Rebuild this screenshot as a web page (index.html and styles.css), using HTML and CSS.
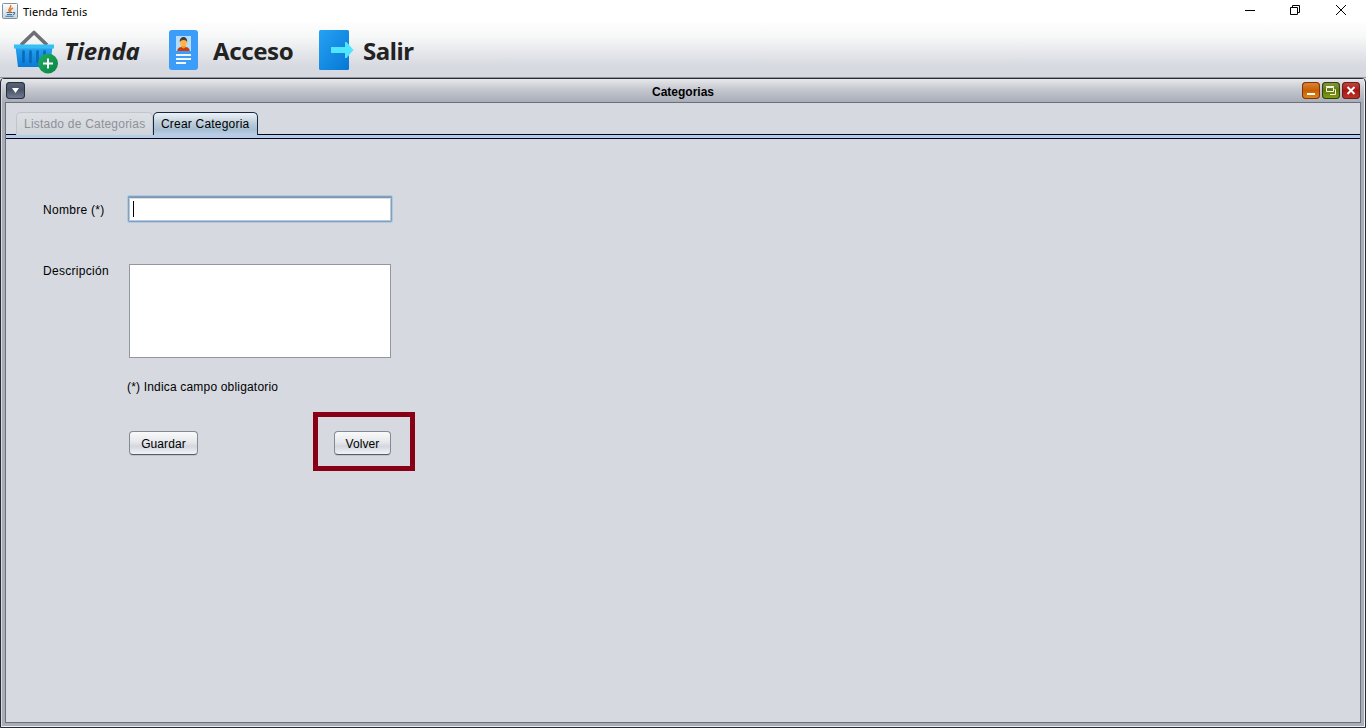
FILE: index.html
```html
<!DOCTYPE html>
<html lang="es">
<head>
<meta charset="utf-8">
<title>Tienda Tenis</title>
<link rel="stylesheet" href="styles.css">
</head>
<body>
<div class="app">
  <header class="titlebar">
    <svg class="java" width="16" height="16" viewBox="0 0 16 16">
      <defs><linearGradient id="jv" x2="0" y2="1"><stop stop-color="#fff"/><stop offset="1" stop-color="#c3d5e2"/></linearGradient></defs>
      <rect x=".5" y=".5" width="15" height="15" rx="1" fill="url(#jv)" stroke="#7d929e"/>
      <path d="M8 9C4.500 6.500 10 5 8.500 2M9 8.500C7.500 7 9 6 11 5" fill="none" stroke="#e87b28" stroke-width="1.500"/>
      <path d="M4.500 9.500h6M5 11.500h5M3.500 13.300h8M11 9.500c2.500-.5 2 1.700 0 2" fill="none" stroke="#4c7190" stroke-width="1.100"/>
    </svg>
    <span class="app-name">Tienda Tenis</span>
    <svg class="window-controls" width="110" height="22" viewBox="0 0 110 22" fill="none" stroke="#000">
      <path d="M1 10.500h10"/>
      <path d="M46.500 7.500h7v7h-7zM48.500 7.500v-2h7v7h-2"/>
      <path d="M92 5l10 10M102 5l-10 10"/>
    </svg>
  </header>
  <nav class="menu">
    <svg class="basket" width="46" height="44" viewBox="0 0 46 44">
      <defs>
        <linearGradient id="bk" x2="0" y2="1"><stop stop-color="#2aa4ef"/><stop offset="1" stop-color="#067bd8"/></linearGradient>
        <linearGradient id="pl" x2="1" y2="1"><stop stop-color="#21ad64"/><stop offset="1" stop-color="#088242"/></linearGradient>
      </defs>
      <path d="M7 15L20 2.500L33 15" fill="none" stroke="#6c7076" stroke-width="3.600" stroke-linejoin="round"/>
      <path d="M1.500 17h37L36 37H4z" fill="url(#bk)"/>
      <path d="M0 14.500h40v4H0z" fill="#35bff4"/>
      <path d="M9.500 21.500v10.500M16.500 21.500v10.500M23.500 21.500v10.500M30.500 21.500v6" stroke="#0b68bb" stroke-width="2.600" stroke-linecap="round"/>
      <circle cx="34" cy="33.500" r="10" fill="url(#pl)"/>
      <path d="M34 28.500v10M29 33.500h10" stroke="#fff" stroke-width="2"/>
    </svg>
    <span class="menu-text menu-store">Tienda</span>
    <svg class="badge" width="29" height="40" viewBox="0 0 29 40">
      <rect width="29" height="40" rx="3" fill="#3b9df7"/>
      <path d="M7 6h15v15H7z" fill="#b5dcfb"/>
      <path d="M8.300 21c0-3.500 3-4.300 6.200-4.300s6.200.8 6.200 4.300z" fill="#cd3908"/>
      <path d="M12.500 14h4v3.500l-2 1-2-1z" fill="#f29a2b"/>
      <ellipse cx="14.500" cy="12" rx="3.600" ry="4.200" fill="#ffb647"/>
      <path d="M10.800 12c-.6-6.600 8-6.600 7.400 0-.8-2.700-6.300-2.700-7.400 0z" fill="#463c3b"/>
      <path d="M7 25h15M7 29h15M7 33h10" stroke="#eef7ff" stroke-width="2"/>
    </svg>
    <span class="menu-text menu-access">Acceso</span>
    <svg class="exit" width="36" height="40" viewBox="0 0 36 40">
      <defs><linearGradient id="ex" x2="1" y2="1"><stop stop-color="#26a2f3"/><stop offset="1" stop-color="#0677d6"/></linearGradient></defs>
      <rect width="30" height="40" rx="1.500" fill="url(#ex)"/>
      <path d="M12 17h14v-5l1.500 0 7 8-7 8H26v-5H12z" fill="#50e6ff"/>
    </svg>
    <span class="menu-text menu-exit">Salir</span>
  </nav>
  <main class="frame">
    <div class="frame-title">
      <span class="frame-menu"><svg width="19" height="17" viewBox="0 0 19 17"><path d="M6 6h7l-3.500 5z" fill="#fff"/></svg></span>
      <h1>Categorias</h1>
      <div class="frame-actions">
        <span class="action minimize"><svg width="18" height="17" viewBox="0 0 18 17"><path d="M5 12h8" stroke="#fff" stroke-width="2"/></svg></span>
        <span class="action restore"><svg width="18" height="17" viewBox="0 0 18 17" fill="none" stroke="#f4f7dc"><path d="M4.500 5.500h7v4h-7zM4 4.500h8M11 12.500h2.500v-5h-1M8 12.500h5"/></svg></span>
        <span class="action close"><svg width="18" height="17" viewBox="0 0 18 17"><path d="M5.500 5l7 7M12.500 5l-7 7" stroke="#fff" stroke-width="2"/></svg></span>
      </div>
    </div>
    <div class="content">
      <div class="tabs">
        <div class="tab disabled"><span>Listado de Categorias</span></div>
        <div class="tab selected"><span>Crear Categoria</span></div>
      </div>
      <div class="tab-line"></div>
      <div class="form">
        <label class="name-label">Nombre (*)</label>
        <div class="name-input"><i class="caret"></i></div>
        <label class="desc-label">Descripción</label>
        <div class="desc-input"></div>
        <p class="hint">(*) Indica campo obligatorio</p>
        <div class="buttons">
          <span class="button save">Guardar</span>
          <div class="highlight"><span class="button back">Volver</span></div>
        </div>
      </div>
    </div>
  </main>
</div>
</body>
</html>
```
FILE: styles.css
```css
* { box-sizing: border-box; }
body { margin: 0; background: #d6d9e0; font: 12px/16px "Liberation Sans", Arial, sans-serif; color: #000; overflow: hidden; }
svg { display: block; flex: none; }
.app { width: 1366px; height: 728px; display: flex; flex-direction: column; }
.titlebar { height: 23px; background: #fff; display: flex; align-items: flex-start; padding: 0 12px 0 2px; }
.java { margin-top: 3px; }
.app-name { font: 11px/16px "Noto Sans", sans-serif; margin: 4px auto 0 5px; }
.window-controls { width: 110px; }
.menu { height: 55px; display: flex; align-items: flex-start; padding: 7px 0 0 14px; background: linear-gradient(#fdfdfe, #f7f8f8 25%, #d6d9e0 80%, #d6d9e0); border-bottom: 1px solid #9297a1; }
.menu-text { font: bold 24px/34px "Noto Sans", sans-serif; color: #222; margin-top: 4px; white-space: nowrap; }
.menu-store { font-style: italic; letter-spacing: -.1px; width: 101px; margin-left: 4px; }
.badge { margin-left: 4px; }
.menu-access { width: 91px; margin-left: 15px; letter-spacing: -.4px; }
.exit { margin-left: 15px; }
.menu-exit { margin-left: 8px; letter-spacing: -.45px; }
.frame { height: 650px; border: 1px solid #272b33; border-radius: 4px 4px 0 0; background: #a9adb7; box-shadow: inset 1px 1px #d8dae0, inset -1px -1px #edeef1; padding: 0 4px 4px; }
.frame-title { height: 23px; margin: 0 -3px; padding: 3px 4px 0 4px; display: flex; background: linear-gradient(#e7e8eb, #c5c8cf 45%, #a9adb7); }
.frame-menu { width: 19px; height: 17px; border-radius: 4px; background: linear-gradient(#5b6577, #485368 45%, #778298); box-shadow: inset 0 0 0 1px #29313e; }
.frame-title h1 { flex: 1; margin: 2px 0 0 39px; text-align: center; font-size: 12px; line-height: 16px; }
.frame-actions { display: flex; gap: 2px; }
.action { width: 18px; height: 17px; border-radius: 4px; }
.minimize { background: linear-gradient(#de873f, #c75f00 50%, #e08a1d); box-shadow: inset 0 0 0 1px #7d3410; }
.restore { background: linear-gradient(#889849, #60780b 50%, #87a014); box-shadow: inset 0 0 0 1px #31400e; }
.close { background: linear-gradient(#c24b43, #a71812 50%, #c2352a); box-shadow: inset 0 0 0 1px #66201f; }
.content { height: 621px; border: 1px solid #6b707d; background: #d6d9e0; }
.tabs { height: 32px; padding: 9px 0 0 10px; display: flex; border-bottom: 1px solid #000420; }
.tab { position: relative; height: 23px; padding: 3px 0 0 7px; border: 1px solid #c2c5cc; border-bottom: 0; border-radius: 5px 5px 0 0; white-space: nowrap; }
.disabled { width: 137px; color: #8e9199; background: linear-gradient(#dcdfe4, #d1d4da); }
.disabled span { letter-spacing: .22px; }
.selected { width: 105px; background: linear-gradient(#edf2f5, #b9cad9 50%, #a8bfd2 75%, #b8cfe5); border-color: #172942; }
.selected span { letter-spacing: .2px; }
.tab-line { height: 4px; background: #b7cce6; border-bottom: 1px solid #000420; }
.form { width: 409px; height: 350px; padding: 56px 0 0 37px; display: grid; grid-template-columns: 84px 288px; grid-template-rows: 68px 115px 34px 65px; }
.name-label { padding-top: 7px; letter-spacing: .28px; }
.name-input { width: 266px; height: 28px; border: 1px solid #b4c9df; border-radius: 2px; background: #fff; box-shadow: inset 0 0 0 1px #73a4d1, inset 0 2px #8d949e, inset 0 3px #dddddd, inset 0 0 0 2px #c3c6cb; padding: 5px; }
.caret { display: block; width: 1px; height: 16px; background: #000; }
.desc-label { letter-spacing: .3px; }
.desc-input { margin: 1px 0 0 2px; width: 262px; height: 94px; border: 1px solid #9297a1; background: #fff; }
.hint { grid-column: 2; margin: 1px 0 0; letter-spacing: .18px; }
.buttons { grid-column: 2; display: flex; }
.button { display: block; height: 24px; border: 1px solid #858992; border-bottom-color: #555c69; border-radius: 4px; background: linear-gradient(#fafafb, #e6e8eb 45%, #d4d7de 65%, #f1f3fb); box-shadow: 0 1px #c1c4cb; text-align: center; line-height: 24px; letter-spacing: .1px; }
.save { width: 69px; margin: 19px 115px 0 2px; }
.highlight { width: 102px; height: 59px; border: 5px solid #880015; padding: 14px 0 0 16px; }
.back { width: 57px; }
```
